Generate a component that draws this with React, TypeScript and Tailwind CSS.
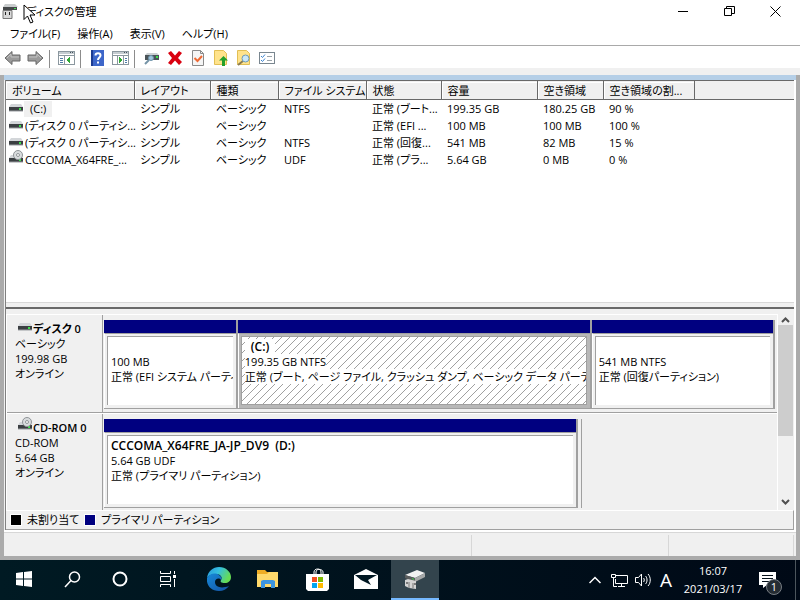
import type { ReactNode } from "react";

type Volume = {
  name: string;
  kind: "disk" | "cd";
  layout: string;
  type: string;
  fs: string;
  status: string;
  capacity: string;
  free: string;
  percent: string;
  selected?: boolean;
};

const volumes: Volume[] = [
  { name: "(C:)", kind: "disk", layout: "シンプル", type: "ベーシック", fs: "NTFS", status: "正常 (ブート...", capacity: "199.35 GB", free: "180.25 GB", percent: "90 %", selected: true },
  { name: "(ディスク 0 パーティシ...", kind: "disk", layout: "シンプル", type: "ベーシック", fs: "", status: "正常 (EFI ...", capacity: "100 MB", free: "100 MB", percent: "100 %" },
  { name: "(ディスク 0 パーティシ...", kind: "disk", layout: "シンプル", type: "ベーシック", fs: "NTFS", status: "正常 (回復...", capacity: "541 MB", free: "82 MB", percent: "15 %" },
  { name: "CCCOMA_X64FRE_...", kind: "cd", layout: "シンプル", type: "ベーシック", fs: "UDF", status: "正常 (プラ...", capacity: "5.64 GB", free: "0 MB", percent: "0 %" },
];

const columns = [
  { label: "ボリューム", width: "w-[128px]" },
  { label: "レイアウト", width: "w-[76px]" },
  { label: "種類", width: "w-[68px]" },
  { label: "ファイル システム", width: "w-[88px]" },
  { label: "状態", width: "w-[75px]" },
  { label: "容量", width: "w-[96px]" },
  { label: "空き領域", width: "w-[66px]" },
  { label: "空き領域の割...", width: "w-[91px]" },
];

function DriveIcon({ kind }: { kind: "disk" | "cd" }) {
  return (
    <svg width="16" height="16" viewBox="0 2 16 16" className="shrink-0 overflow-visible" aria-hidden="true">
      <path d="M3 5h10l2 3H1z" fill="#d3d6d9" />
      <path d="M1 8h14v4H1z" fill="#3b3f42" />
      <path d="M1 12h14" stroke="#9a9ea1" />
      <rect x="11" y="9" width="2" height="2" fill="#3be04c" />
      {kind === "cd" && (
        <>
          <circle cx="10" cy="5" r="4.5" fill="#d9dcde" stroke="#8f9497" />
          <circle cx="10" cy="5" r="1.5" fill="#fff" stroke="#8f9497" />
        </>
      )}
    </svg>
  );
}

function ConsoleIcon({ flip }: { flip?: boolean }) {
  return (
    <svg width="17" height="16" viewBox="0 0 17 16" shapeRendering="crispEdges" aria-hidden="true">
      <rect x="0.5" y="1.5" width="16" height="13" fill="#fff" stroke="#8b979f" />
      <path d="M1 2h15v2H1z" fill="#c5ccd1" />
      <path d="M1 5.500h15" stroke="#8b979f" />
      <path d="M12 2.500h1M14 2.500h1" stroke="#44525c" />
      {flip ? (
        <>
          <path d="M11.500 6v8M5.500 6v8" stroke="#8b979f" />
          <path d="M13 8.500h2M13 10.500h2M13 12.500h2" stroke="#4d7ba6" />
          <path d="M7 7v6l4-3z" fill="#2fa834" />
        </>
      ) : (
        <>
          <path d="M6.500 6v8" stroke="#8b979f" />
          <path d="M2 8.500h3M2 10.500h3M2 12.500h3" stroke="#4d7ba6" />
          <path d="M12 7v6l-4-3z" fill="#2fa834" />
        </>
      )}
    </svg>
  );
}

function ArrowIcon({ flip }: { flip?: boolean }) {
  return (
    <svg width="17" height="16" viewBox="0 0 17 16" aria-hidden="true">
      <path
        d={flip ? "M16 8 9 1.500v3.500H1v6h8v3.500z" : "M1 8l7-6.500v3.500h8v6H8v3.500z"}
        fill="#9b9b9b"
        stroke="#666"
      />
      <path d={flip ? "M2 7h8V4l4 4" : "M3 8l4-4v3h8"} fill="none" stroke="#c2c2c2" />
    </svg>
  );
}

function ToolButton({ label, children }: { label: string; children: ReactNode }) {
  return (
    <button type="button" aria-label={label} className="flex h-5 w-[23px] items-center justify-center">
      {children}
    </button>
  );
}

function ToolSeparator() {
  return <div className="mr-[5px] ml-0.5 h-[18px] w-px bg-[#8c8c8c]" />;
}

function Toolbar() {
  return (
    <div className="flex h-[22px] items-end bg-white pl-px" role="toolbar" aria-label="標準">
      <ToolButton label="戻る"><ArrowIcon /></ToolButton>
      <ToolButton label="進む"><ArrowIcon flip /></ToolButton>
      <ToolSeparator />
      <ToolButton label="コンソール ツリー"><ConsoleIcon /></ToolButton>
      <ToolSeparator />
      <ToolButton label="ヘルプ">
        <svg width="13" height="16" viewBox="0 0 13 16" aria-hidden="true">
          <rect width="13" height="16" fill="#3d66c9" />
          <path d="M0 0h2v16H0z" fill="#1d3b91" />
          <path d="M4.500 5.500c0-3 5-3 5 0 0 2-2.500 2-2.500 4.500M7 11.500v2" fill="none" stroke="#fff" strokeWidth="2" />
        </svg>
      </ToolButton>
      <ToolButton label="操作ウィンドウ"><ConsoleIcon flip /></ToolButton>
      <ToolSeparator />
      <ToolButton label="最新の情報に更新">
        <svg width="16" height="16" viewBox="0 0 16 16" aria-hidden="true">
          <path d="M3 3h10l2 2H1z" fill="#ccd1d4" />
          <path d="M1 5h14v5H1z" fill="#4b5458" />
          <path d="M12 6h2v2h-2z" fill="#3be04c" />
          <path d="M5 10l-4 4" stroke="#7593a6" strokeWidth="2" />
          <circle cx="7" cy="8" r="2.500" fill="#9fc6dd" stroke="#6c91a8" />
        </svg>
      </ToolButton>
      <ToolButton label="削除">
        <svg width="16" height="16" viewBox="0 0 16 16" aria-hidden="true">
          <path d="M1 3l3-2 4 4.500L12 1l3 2-4 5 4 4-3 3-4-4.500L4 15l-3-2 4-5z" fill="#d9000f" />
        </svg>
      </ToolButton>
      <ToolButton label="プロパティ">
        <svg width="14" height="16" viewBox="0 0 14 16" aria-hidden="true">
          <path d="M1.500 .5h8l3 3v12h-11z" fill="#f5f5f5" stroke="#8a8a8a" />
          <path d="M9.500 .5v3h3" fill="none" stroke="#8a8a8a" />
          <path d="M3.500 8l3 3 4.500-5" fill="none" stroke="#ee6a35" strokeWidth="2" />
        </svg>
      </ToolButton>
      <ToolButton label="開く">
        <svg width="14" height="16" viewBox="0 0 14 16" aria-hidden="true">
          <path d="M.5 .5h9l3 3v11H.5z" fill="#ffe38c" stroke="#e2bf54" />
          <path d="M9.500 6L14 10.500h-3V16H8v-5.500H5z" fill="#23a02b" />
        </svg>
      </ToolButton>
      <ToolButton label="エクスプローラー">
        <svg width="15" height="16" viewBox="0 0 15 16" aria-hidden="true">
          <path d="M1.500 .5h9l3 3v11h-12z" fill="#ffe38c" stroke="#e2bf54" />
          <path d="M7 11l-5 4" stroke="#8b7b50" strokeWidth="2" />
          <circle cx="9.500" cy="8.500" r="3.500" fill="#cbe8f8" stroke="#6f9ab5" />
        </svg>
      </ToolButton>
      <ToolButton label="ビュー">
        <svg width="16" height="14" viewBox="0 0 16 14" aria-hidden="true">
          <rect x=".5" y="1.500" width="15" height="11" fill="#fff" stroke="#79868f" />
          <path d="M2 5l1.500 1.500L6 3.500M2 9l1.500 1.500L6 7.500" fill="none" stroke="#3c84cf" />
          <path d="M8 5.500h5M8 9.500h5" stroke="#9aa3a9" />
        </svg>
      </ToolButton>
    </div>
  );
}

function TitleBar() {
  return (
    <header className="relative flex h-[22px] items-center bg-white pl-0.5">
      <svg width="16" height="16" viewBox="0 0 16 16" aria-hidden="true">
        <path d="M3 1h10l3 3H1z" fill="#c9cccd" />
        <path d="M1 4h14v3H1z" fill="#45484a" />
        <path d="M12 5h2v1h-2z" fill="#42db51" />
        <path d="M1 7.500h9v8H1z" fill="#d8d8d8" stroke="#777" />
        <path d="M3 9h1v3H3zM7 9h1v3H7z" fill="#222" />
      </svg>
      <h1 className="ml-2 pt-px text-[11px] leading-4">ディスクの管理</h1>
      <svg width="13" height="21" viewBox="0 0 13 21" className="absolute top-1 left-[23px]" aria-hidden="true">
        <path d="M1 1v14.500l3.500-3.500 3 7 2.500-1-3-7h5z" fill="#fff" stroke="#000" />
      </svg>
      <div className="ml-auto flex pr-0.5">
        <button type="button" aria-label="最小化" className="flex h-[22px] w-[46px] items-center justify-center">
          <svg width="10" height="10" viewBox="0 0 10 10" aria-hidden="true"><path d="M0 5.500h10" stroke="#000" /></svg>
        </button>
        <button type="button" aria-label="元に戻す" className="flex h-[22px] w-[46px] items-center justify-center">
          <svg width="11" height="10" viewBox="0 0 11 10" aria-hidden="true">
            <path d="M.5 2.500h7v7h-7zM2.500 2.500v-2h8v7h-3" fill="none" stroke="#000" />
          </svg>
        </button>
        <button type="button" aria-label="閉じる" className="flex h-[22px] w-[46px] items-center justify-center">
          <svg width="11" height="11" viewBox="0 0 11 11" aria-hidden="true"><path d="M.5 .5l10 10M10.500 .5l-10 10" stroke="#000" /></svg>
        </button>
      </div>
    </header>
  );
}

function VolumeTable() {
  return (
    <table className="w-full table-fixed border-collapse text-left whitespace-nowrap">
      <thead>
        <tr className="h-[19px] border-y border-[#696969] bg-[#f0f0f0]">
          {columns.map((c) => (
            <th key={c.label} scope="col" className={`${c.width} border-r border-[#696969] p-0 font-normal`}>
              <div className="border-t border-l border-white pl-[5px] leading-4">{c.label}</div>
            </th>
          ))}
          <td className="p-0" />
        </tr>
      </thead>
      <tbody>
        {volumes.map((v, i) => (
          <tr key={i} className="h-[17px]">
            <td className="p-0 pt-px">
              <div className="flex items-center pl-0.5">
                <DriveIcon kind={v.kind} />
                <span className={v.selected ? "bg-[#f0f0f0] px-1.5 leading-4" : "pl-px leading-4"}>{v.name}</span>
              </div>
            </td>
            {[v.layout, v.type, v.fs, v.status, v.capacity, v.free, v.percent].map((text, j) => (
              <td key={j} className="p-0 pt-px pl-1.5 leading-4">{text}</td>
            ))}
            <td className="p-0" />
          </tr>
        ))}
      </tbody>
    </table>
  );
}

type PartitionProps = { grow: string; title?: string; size: string; status: string; selected?: boolean };

function Partition({ grow, title, size, status, selected }: PartitionProps) {
  return (
    <div className={`${grow} flex min-w-0 flex-col border-r-2 border-b border-[#a0a0a0]`}>
      <div className="h-[13px] bg-[#000080]" />
      <div className={`flex min-h-0 flex-1 border-t border-l border-t-[#a0a0a0] border-l-white p-[3px] pt-0.5 pl-0.5 ${selected ? "bg-[#b8b8b8]" : "bg-[#f0f0f0]"}`}>
        <div className={`relative min-w-0 flex-1 overflow-hidden border-t border-l border-[#a0a0a0] bg-white pt-0.5 pl-[3px] whitespace-nowrap ${selected ? "border-r border-b" : ""}`}>
          {selected && (
            <svg className="absolute inset-0 size-full" shapeRendering="crispEdges" aria-hidden="true">
              <defs>
                <pattern id="hatch" width="8" height="8" patternUnits="userSpaceOnUse">
                  <path d="M-1 9L9-1" stroke="#a0a0a0" strokeWidth="1" />
                </pattern>
              </defs>
              <rect width="100%" height="100%" fill="url(#hatch)" />
            </svg>
          )}
          <div className="relative flex flex-col items-start leading-[15px]">
            <strong className={`h-[15px] text-xs leading-[15px] font-semibold whitespace-pre ${selected ? "bg-white px-1.5" : ""}`}>{title}</strong>
            <span className="bg-white">{size}</span>
            <span className="max-w-full overflow-hidden bg-white">{status}</span>
          </div>
        </div>
      </div>
    </div>
  );
}

function DiskRow({ kind, name, type, size, children }: { kind: "disk" | "cd"; name: string; type: string; size: string; children: ReactNode }) {
  return (
    <section className="flex h-[99px] border-t border-white">
      <div className="w-24 shrink-0 border-r border-b border-[#a0a0a0] pt-[5px] pl-2 leading-[15px]">
        <h2 className="flex items-center pl-0.5 font-semibold"><DriveIcon kind={kind} />{name}</h2>
        <p>{type}</p>
        <p>{size}</p>
        <p>オンライン</p>
      </div>
      <div className="flex min-w-0 flex-1 border-b border-[#a0a0a0] pt-[5px] pb-[3px] pl-px">{children}</div>
    </section>
  );
}

function GraphicalView() {
  return (
    <div className="flex h-[196px] overflow-hidden border-l border-white pr-px">
      <div className="min-w-0 flex-1 overflow-hidden">
        <DiskRow kind="disk" name="ディスク 0" type="ベーシック" size="199.98 GB">
          <div className="flex min-w-0 flex-1 pr-0.5">
            <Partition grow="flex-[133]" size="100 MB" status="正常 (EFI システム パーティション)" />
            <Partition grow="flex-[355]" title="(C:)" size="199.35 GB NTFS" status="正常 (ブート, ページ ファイル, クラッシュ ダンプ, ベーシック データ パーティション)" selected />
            <Partition grow="flex-[183]" size="541 MB NTFS" status="正常 (回復パーティション)" />
          </div>
        </DiskRow>
        <DiskRow kind="cd" name="CD-ROM 0" type="CD-ROM" size="5.64 GB">
          <div className="flex min-w-0 flex-[477] border-r border-[#a0a0a0] pr-[3px]">
            <Partition grow="flex-1" title="CCCOMA_X64FRE_JA-JP_DV9  (D:)" size="5.64 GB UDF" status="正常 (プライマリ パーティション)" />
          </div>
          <div className="flex-[196]" />
        </DiskRow>
      </div>
      <div className="flex w-4 flex-col items-center border-l border-white">
        <button type="button" aria-label="上へスクロール" className="flex h-[11px] w-full items-center justify-center">
          <svg width="9" height="6" viewBox="0 0 9 6" aria-hidden="true"><path d="M1 5l3.500-3.500L8 5" fill="none" stroke="#505050" strokeWidth="2" /></svg>
        </button>
        <div className="h-[111px] w-full bg-[#cdcdcd]" />
        <button type="button" aria-label="下へスクロール" className="mt-auto flex h-[17px] w-full items-center justify-center">
          <svg width="9" height="6" viewBox="0 0 9 6" aria-hidden="true"><path d="M1 1l3.500 3.500L8 1" fill="none" stroke="#505050" strokeWidth="2" /></svg>
        </button>
      </div>
    </div>
  );
}

function TaskButton({ label, active, children }: { label: string; active?: boolean; children: ReactNode }) {
  return (
    <button
      type="button"
      aria-label={label}
      className={`flex h-10 w-12 items-center justify-center border-b-2 ${active ? "border-[#76b9ff] bg-[#33444d]" : "border-transparent"}`}
    >
      {children}
    </button>
  );
}

function Taskbar() {
  return (
    <footer className="flex h-10 shrink-0 items-center bg-linear-to-r from-[#001a23] to-[#000916] text-white">
      <TaskButton label="スタート">
        <svg width="16" height="16" viewBox="0 0 16 16" fill="#fff" aria-hidden="true">
          <path d="M0 2l7-1v6.500H0zM8 1l8-1v7.500H8zM0 8.500h7V15l-7-1zM8 8.500h8V16l-8-1z" />
        </svg>
      </TaskButton>
      <TaskButton label="検索">
        <svg width="17" height="17" viewBox="0 0 17 17" fill="none" stroke="#fff" strokeWidth="1.500" aria-hidden="true">
          <circle cx="10.500" cy="6" r="5" /><path d="M7 9.500L1 16" />
        </svg>
      </TaskButton>
      <TaskButton label="Cortana">
        <svg width="16" height="16" viewBox="0 0 16 16" fill="none" stroke="#fff" strokeWidth="2" aria-hidden="true"><circle cx="8" cy="8" r="6.500" /></svg>
      </TaskButton>
      <TaskButton label="タスク ビュー">
        <svg width="16" height="16" viewBox="0 0 16 16" fill="none" stroke="#fff" aria-hidden="true">
          <path d="M.5 0v2.500h10V0M.5 16v-2.500h10V16M.5 5.500h10v5H.5zM14.500 0v3M14.500 8v8" />
          <path d="M13 4h3v3h-3z" fill="#fff" stroke="none" />
        </svg>
      </TaskButton>
      <div className="flex gap-px pl-[3px]">
        <TaskButton label="Microsoft Edge">
          <svg width="24" height="24" viewBox="0 0 24 24" aria-hidden="true">
            <defs>
              <linearGradient id="edgeTop" x1="0" x2="1" y1="0" y2=".4"><stop stopColor="#2795dc" /><stop offset=".5" stopColor="#35bfdf" /><stop offset="1" stopColor="#65dc55" /></linearGradient>
              <linearGradient id="edgeLow" x1="0" x2="1" y1="0" y2="1"><stop stopColor="#1689d8" /><stop offset="1" stopColor="#1553a5" /></linearGradient>
            </defs>
            <path d="M0 11C1 4 6 0 12 0c7 0 12 5 12 10 0 4-3 6-6 6-4 0-5-1-4-3 2-3-1-6-5-6-4 0-7 1-9 4z" fill="url(#edgeTop)" />
            <path d="M0 11c2-4 8-6 12-3 3 2 3 4 2 5-2-3-6-1-6 2 0 5 6 7 14 4-2 3-6 5-10 5C4 24-1 18 0 11z" fill="url(#edgeLow)" />
          </svg>
        </TaskButton>
        <TaskButton label="エクスプローラー">
          <svg width="22" height="18" viewBox="0 0 22 18" aria-hidden="true">
            <path d="M0 0h8l2 2h11v15H0z" fill="#efad25" />
            <path d="M0 4h10l2-2h9v15H0z" fill="#ffd96b" />
            <path d="M4 18v-7l2-1h10l2 1v7h-4v-4H8v4z" fill="#3c94df" />
          </svg>
        </TaskButton>
        <TaskButton label="Microsoft Store">
          <svg width="23" height="23" viewBox="0 0 23 23" aria-hidden="true">
            <path d="M8 6V4c0-4 7-4 7 0v2M10 6V4c0-4 7-3 7 0v2" fill="none" stroke="#fff" />
            <path d="M0 6h23v15l-2 2H2l-2-2z" fill="#fff" />
            <path d="M6 9h5v5H6z" fill="#f25022" /><path d="M12 9h5v5h-5z" fill="#7fba00" />
            <path d="M6 15h5v5H6z" fill="#00a4ef" /><path d="M12 15h5v5h-5z" fill="#ffb900" />
          </svg>
        </TaskButton>
        <TaskButton label="メール">
          <svg width="24" height="20" viewBox="0 0 24 20" aria-hidden="true">
            <path d="M0 6L12 0l12 6v14H0z" fill="#fff" />
            <path d="M1 6h22l-9 5 3 5L7 11z" fill="#001722" />
          </svg>
        </TaskButton>
        <TaskButton label="ディスクの管理" active>
          <svg width="22" height="22" viewBox="0 0 22 22" aria-hidden="true">
            <path d="M1 7L13 2l8 3-10 5z" fill="#f2f2f2" />
            <path d="M1 7l10 3v4L1 10z" fill="#5b5d5e" /><path d="M11 10l10-5v4l-10 5z" fill="#a6a8a8" />
            <path d="M8 10l2 1v1l-2-1z" fill="#3bd849" />
            <path d="M1 12l3-1 8 2v8l-7-1-4-2z" fill="#d4d4d4" /><path d="M5 14v6M9 15v5" stroke="#777" />
            <path d="M3 14v2M11 15v2" stroke="#222" />
          </svg>
        </TaskButton>
      </div>
      <div className="ml-auto flex h-full items-center">
        <button type="button" aria-label="隠れているインジケーター" className="flex w-6 justify-center">
          <svg width="12" height="8" viewBox="0 0 12 8" fill="none" stroke="#fff" strokeWidth="1.500" aria-hidden="true"><path d="M.5 7L6 1.500 11.500 7" /></svg>
        </button>
        <button type="button" aria-label="ネットワーク" className="flex w-6 justify-center">
          <svg width="17" height="15" viewBox="0 0 17 15" fill="none" stroke="#fff" aria-hidden="true">
            <path d="M5 2.500h11.500v8h-12V6M7 13.500h7M10.500 11v3M.5 1.500h4v3h-4zM2.500 5v8.500H6" />
          </svg>
        </button>
        <button type="button" aria-label="音量" className="flex w-6 justify-center">
          <svg width="17" height="14" viewBox="0 0 17 14" fill="none" stroke="#fff" aria-hidden="true">
            <path d="M.5 4.500h3l3-3.500v12l-3-3.500h-3zM8.500 5c1 1 1 3 0 4M10.500 3c2 2 2 6 0 8M13 1c3 3 3 9 0 12" />
          </svg>
        </button>
        <button type="button" aria-label="IME" className="w-[22px] text-[19px] leading-6 font-medium">A</button>
        <time dateTime="2021-03-17T16:07" className="w-[72px] text-center text-[11px] leading-[18px]">16:07<br />2021/03/17</time>
        <button type="button" aria-label="通知 1 件" className="relative flex h-full w-[46px] items-center pl-2.5">
          <svg width="17" height="16" viewBox="0 0 17 16" aria-hidden="true">
            <path d="M0 0h17v13H8l-4 3v-3H0z" fill="#fff" /><path d="M3 3.500h11M3 6.500h11M3 9.500h7" stroke="#06121c" />
          </svg>
          <span className="absolute top-[19px] left-[17px] flex size-4 items-center justify-center rounded-full border border-[#777d83] bg-[#252c33] text-[11px]">1</span>
        </button>
        <div className="h-full w-[5px] border-l border-[#4c555c]" />
      </div>
    </footer>
  );
}

export default function App() {
  return (
    <div className="flex h-screen flex-col overflow-hidden bg-[#f0f0f0] font-['Open_Sans','Noto_Sans_CJK_JP',sans-serif] text-[11px] text-black [font-feature-settings:'palt']">
      <TitleBar />
      <nav className="flex h-[23px] items-center gap-[17px] bg-white pl-2.5">
        {["ファイル(F)", "操作(A)", "表示(V)", "ヘルプ(H)"].map((m) => (
          <button key={m} type="button" className="leading-4">{m}</button>
        ))}
      </nav>
      <div className="h-px bg-[#a9a9a9]" />
      <Toolbar />
      <div className="h-[7px] shrink-0 bg-[#f0f0f0]" />
      <div className="flex min-h-0 flex-1 flex-col border-x-4 border-b-4 border-[#ababab]">
        <main className="flex min-h-0 flex-1 flex-col">
          <div className="h-[5px] shrink-0 bg-[#b5cfe7]" />
          <div className="flex min-h-0 flex-1 flex-col pl-px">
            <div className="flex min-h-0 flex-1 flex-col border-r-2 border-l border-r-white border-l-[#808080]">
              <div className="min-h-0 flex-1 overflow-hidden bg-white"><VolumeTable /></div>
              <div className="h-[7px] shrink-0 border-t border-b-2 border-t-[#d8d8d8] border-b-[#696969]" />
              <div className="h-[5px] shrink-0" />
              <GraphicalView />
              <div className="flex h-5 shrink-0 items-center gap-[5px] border-t border-r border-b border-t-white border-r-[#a0a0a0] border-b-[#a0a0a0] pl-1">
                <span className="size-3 border border-white bg-black" />
                <span>未割り当て</span>
                <span className="size-3 border border-white bg-[#000080]" />
                <span>プライマリ パーティション</span>
              </div>
            </div>
          </div>
        </main>
        <div className="flex h-[26px] shrink-0 border-t-2 border-white">
          <div className="flex flex-1 border-t border-[#d7d7d7] pt-0.5">
            <div className="flex-[469] border-r border-[#d7d7d7]" />
            <div className="flex-[197] border-r border-[#d7d7d7]" />
            <div className="mr-0.5 flex-[125] border-r border-[#d7d7d7]" />
          </div>
        </div>
      </div>
      <Taskbar />
    </div>
  );
}
